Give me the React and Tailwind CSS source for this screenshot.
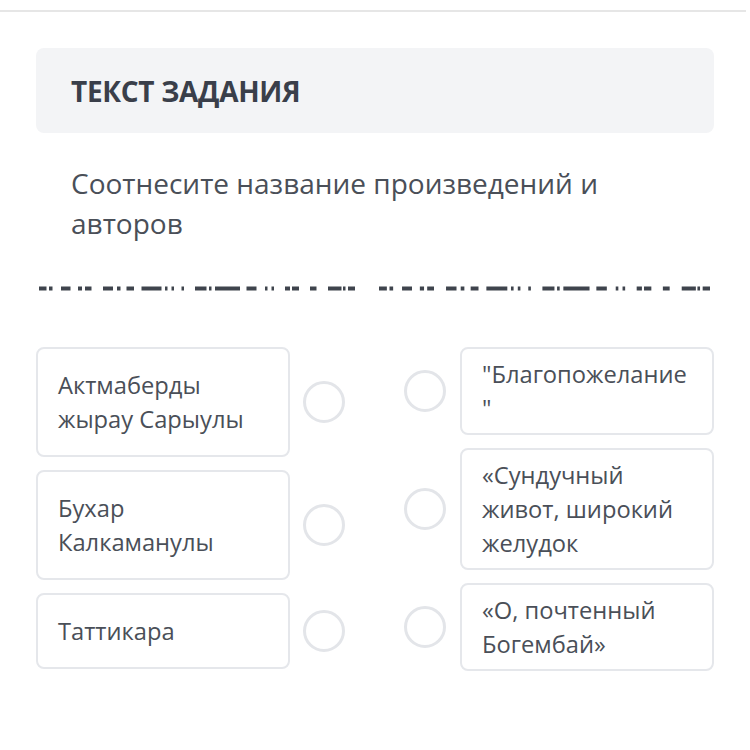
import React from "react";

const dashes = [
  [0, 7.5], [10, 3.5], [22, 9.5], [39, 4], [46, 6.5], [64, 10], [78, 3.5], [87.5, 7.5],
  [102.5, 20], [126, 2.5], [132.5, 2.5], [142.5, 2.5], [156, 11.5], [170, 2.5], [176, 25],
  [207.5, 10], [226, 2.5], [232.5, 2.5], [246, 5], [253, 7], [271, 6.5], [289, 13.5],
  [304, 2.5], [309, 7],
];

function DashLine({ width }) {
  return (
    <svg width={width} height="5" viewBox="0 0 316 5" preserveAspectRatio="none" className="block">
      {dashes.map(([x, w], i) => (
        <rect key={i} x={x} y="0.5" width={w} height="4" fill="#3f444d" />
      ))}
    </svg>
  );
}

function Circle() {
  return <div className="w-[42px] h-[42px] rounded-full border-[3px] border-[#e3e5e9] shrink-0" />;
}

const left = [
  { text: "Актмаберды жырау Сарыулы" },
  { text: "Бухар Калкаманулы" },
  { text: "Таттикара" },
];

const right = [
  { text: "\"Благопожелание \"" },
  { text: "«Сундучный живот, широкий желудок" },
  { text: "«О, почтенный Богембай»" },
];

export default function App() {
  return (
    <div className="w-[750px] h-[750px] bg-white overflow-hidden" style={{ fontFamily: '"Open Sans", sans-serif' }}>
      <div className="mt-[10px] h-[2px] bg-[#e6e6e6] w-[746px]" />
      <div className="px-9">
        <div className="mt-9 h-[85px] bg-[#f3f4f6] rounded-lg flex items-center px-[35px]">
          <h2 className="text-[28px] font-bold text-[#3a3f4a] tracking-[-0.3px]">ТЕКСТ ЗАДАНИЯ</h2>
        </div>
        <p className="mt-[30px] ml-[35px] w-[600px] text-[28px] leading-[40px] text-[#4a4f58]">
          Соотнесите название произведений и авторов
        </p>
        <div className="mt-[43px] flex items-center pl-[3px]">
          <DashLine width={316} />
          <div className="w-[24px]" />
          <DashLine width={331} />
        </div>
        <div className="mt-[56px] flex justify-between">
          <div className="flex flex-col gap-[13px]">
            {left.map((item, i) => (
              <div key={i} className="flex items-center gap-[13px]">
                <div className="w-[254px] border-2 border-[#e5e7eb] rounded-lg px-[20px] py-[19px] text-[23.7px] leading-[34px] text-[#4a4f58]">
                  {item.text}
                </div>
                <Circle />
              </div>
            ))}
          </div>
          <div className="flex flex-col gap-[13px]">
            {right.map((item, i) => (
              <div key={i} className="flex items-center gap-[14px]">
                <Circle />
                <div className="w-[254px] border-2 border-[#e5e7eb] rounded-lg px-[20px] py-[8px] text-[23.7px] leading-[34px] text-[#4a4f58]">
                  {item.text}
                </div>
              </div>
            ))}
          </div>
        </div>
      </div>
    </div>
  );
}
